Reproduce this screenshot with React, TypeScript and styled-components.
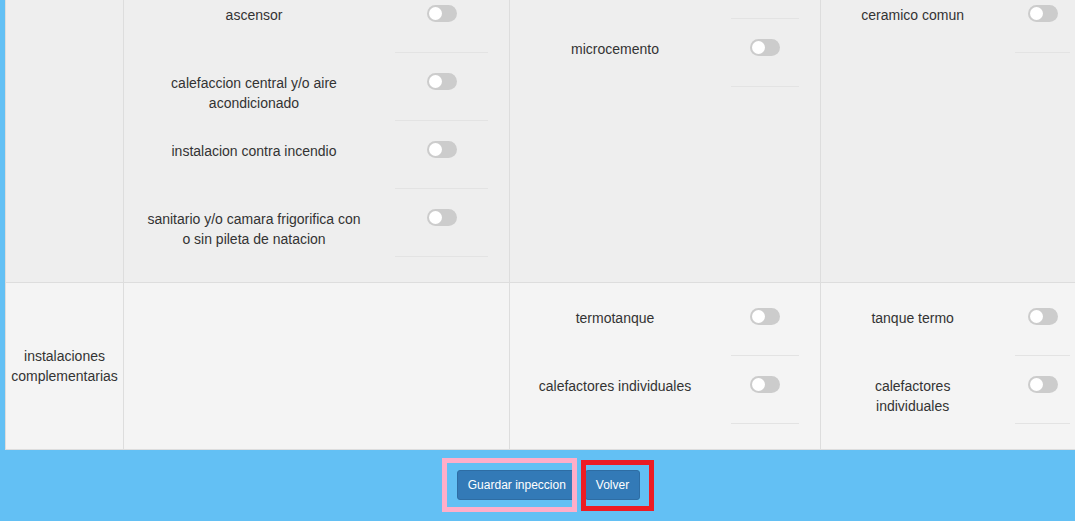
import React from "react";
import styled, { createGlobalStyle } from "styled-components";

const Global = createGlobalStyle`
  *, *::before, *::after { box-sizing: border-box; }
  html, body {
    margin: 0;
    padding: 0;
    background: #63c0f4;
    overflow: hidden;
    font-family: "Liberation Sans", Arial, Helvetica, sans-serif;
    font-size: 14px;
    color: #333;
  }
`;

const Page = styled.div`
  width: 1097px;
  padding: 0 5px;
  margin-top: -224px;
  background: #63c0f4;
`;

const Table = styled.div`
  display: grid;
  grid-template-columns: 118px 386px 311px 271px;
  border-left: 1px solid #ddd;
`;

const Cell = styled.div<{ $bg: string }>`
  display: flex;
  flex-direction: column;
  justify-content: center;
  padding: 5px;
  background: ${(p) => p.$bg};
  border-right: 1px solid #ddd;
  border-bottom: 1px solid #ddd;
`;

const CategoryLabel = styled.div`
  text-align: center;
  line-height: 20px;
`;

const ItemList = styled.div`
  margin-bottom: 20px;
`;

const Item = styled.div`
  display: grid;
  grid-template-columns: 2fr 1fr;
`;

const ItemLabel = styled.div`
  padding: 20px 15px 0;
  text-align: center;
  line-height: 20px;
`;

const ToggleCol = styled.div`
  padding: 0 16px;
`;

const ToggleBox = styled.div`
  height: 68px;
  padding-top: 20px;
  display: flex;
  justify-content: center;
  align-items: flex-start;
  border-bottom: 1px solid #e3e3e3;
`;

const Switch = styled.span<{ $on?: boolean }>`
  position: relative;
  display: block;
  width: 30px;
  height: 17px;
  border-radius: 9px;
  background: ${(p) => (p.$on ? "#337ab7" : "#ccc")};
  &::after {
    content: "";
    position: absolute;
    top: 2px;
    left: ${(p) => (p.$on ? "15px" : "2px")};
    width: 13px;
    height: 13px;
    border-radius: 50%;
    background: #fff;
  }
`;

const Footer = styled.div`
  display: flex;
  justify-content: center;
  gap: 8px;
  padding: 20px 0 40px;
`;

const ButtonSlot = styled.div`
  position: relative;
`;

const Button = styled.button`
  display: block;
  font-family: "Liberation Sans", Arial, Helvetica, sans-serif;
  font-size: 12px;
  line-height: 18px;
  padding: 5px 10px;
  color: #fff;
  background: #337ab7;
  border: 1px solid #2e6da4;
  border-radius: 3px;
  cursor: pointer;
`;

const Highlight = styled.span<{
  $color: string;
  $left: number;
  $top: number;
  $w: number;
  $h: number;
}>`
  position: absolute;
  left: ${(p) => p.$left}px;
  top: ${(p) => p.$top}px;
  width: ${(p) => p.$w}px;
  height: ${(p) => p.$h}px;
  border: 5px solid ${(p) => p.$color};
  pointer-events: none;
`;

type Row = {
  bg: string;
  category: string;
  cols: string[][];
};

// Items above the visible area are scrolled out of view; their labels are not shown.
const rows: Row[] = [
  {
    bg: "#eeeeee",
    category: "",
    cols: [
      [
        "",
        "",
        "",
        "ascensor",
        "calefaccion central y/o aire acondicionado",
        "instalacion contra incendio",
        "sanitario y/o camara frigorifica con o sin pileta de natacion",
      ],
      ["", "microcemento"],
      ["ceramico comun"],
    ],
  },
  {
    bg: "#f4f4f4",
    category: "instalaciones complementarias",
    cols: [[], ["termotanque", "calefactores individuales"], ["tanque termo", "calefactores individuales"]],
  },
];

function ItemsCell({ bg, items }: { bg: string; items: string[] }) {
  return (
    <Cell $bg={bg}>
      {items.length > 0 && (
        <ItemList>
          {items.map((label, i) => (
            <Item key={i}>
              <ItemLabel>{label}</ItemLabel>
              <ToggleCol>
                <ToggleBox>
                  <Switch />
                </ToggleBox>
              </ToggleCol>
            </Item>
          ))}
        </ItemList>
      )}
    </Cell>
  );
}

export default function App() {
  return (
    <>
      <Global />
      <Page>
        <Table>
          {rows.map((row, r) => (
            <React.Fragment key={r}>
              <Cell $bg={row.bg}>
                <CategoryLabel>{row.category}</CategoryLabel>
              </Cell>
              {row.cols.map((items, c) => (
                <ItemsCell key={c} bg={row.bg} items={items} />
              ))}
            </React.Fragment>
          ))}
        </Table>
        <Footer>
          <ButtonSlot>
            <Button>Guardar inpeccion</Button>
            <Highlight $color="#ffaec9" $left={-15} $top={-12} $w={135} $h={54} />
          </ButtonSlot>
          <ButtonSlot>
            <Button>Volver</Button>
            <Highlight $color="#ed1c24" $left={-4} $top={-10} $w={73} $h={51} />
          </ButtonSlot>
        </Footer>
      </Page>
    </>
  );
}
